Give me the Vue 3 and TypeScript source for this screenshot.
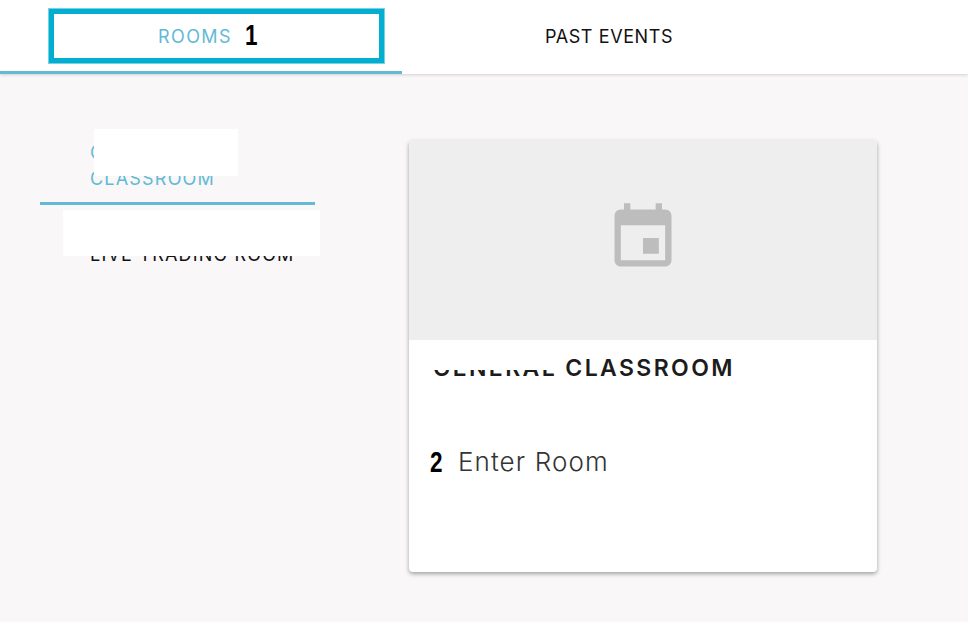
<template>
  <div class="page">
    <header class="tabs">
      <button
        v-for="tab in tabs"
        :key="tab.label"
        class="tab"
        :class="{ active: tab.active }"
      >
        {{ tab.label }}
      </button>
    </header>

    <main class="content">
      <nav class="rooms">
        <a
          v-for="room in rooms"
          :key="room.name"
          class="room"
          :class="{ selected: room.selected }"
        >
          {{ room.name }}
        </a>
      </nav>

      <section class="card">
        <div class="card-image">
          <svg class="event-icon" viewBox="0 0 24 24">
            <path d="M17 12h-5v5h5v-5zM16 1v2H8V1H6v2H5c-1.11 0-1.99.9-1.99 2L3 19c0 1.1.89 2 2 2h14c1.1 0 2-.9 2-2V5c0-1.1-.9-2-2-2h-1V1h-2zm3 18H5V8h14v11z" />
          </svg>
        </div>
        <div class="card-body">
          <h2 class="card-title">GENERAL CLASSROOM</h2>
          <p class="card-action">Enter Room</p>
        </div>
      </section>
    </main>

    <!-- annotations painted over the screenshot -->
    <div class="callout"></div>
    <span class="marker marker-one">1</span>
    <span class="marker marker-two">2</span>
    <div class="patch patch-room-a"></div>
    <div class="patch patch-room-b"></div>
    <div class="patch patch-title"></div>
  </div>
</template>

<script setup lang="ts">
const tabs = [
  { label: 'ROOMS', active: true },
  { label: 'PAST EVENTS', active: false },
];

const rooms = [
  { name: 'GENERAL CLASSROOM', selected: true },
  { name: 'LIVE TRADING ROOM', selected: false },
];
</script>

<style>
html,
body {
  margin: 0;
  background: #f9f7f8;
}
</style>

<style scoped>
.page {
  position: relative;
  width: 968px;
  height: 622px;
  overflow: hidden;
  background: #f9f7f8;
  font-family: Inter, "Open Sans", sans-serif;
}

.tabs {
  display: flex;
  height: 74px;
  background: #fff;
  box-shadow: 0 1px 3px rgba(0, 0, 0, 0.16);
}

.tab {
  width: 402px;
  height: 74px;
  padding: 2px 0 0;
  border: 0;
  border-bottom: 3px solid transparent;
  background: none;
  font: inherit;
  font-size: 18px;
  letter-spacing: 0.6px;
  color: #111;
}

.tab.active {
  padding-right: 12px;
  border-bottom-color: #62bad5;
  letter-spacing: 1.4px;
  color: #62bad5;
}

.tab:last-child {
  padding-left: 12px;
}

.content {
  display: flex;
  align-items: flex-start;
  padding: 66px 0 0 40px;
}

.rooms {
  display: flex;
  flex-direction: column;
  width: 275px;
  margin-right: 94px;
}

.room {
  box-sizing: border-box;
  padding: 0 0 0 50px;
  font-size: 18px;
  line-height: 26px;
  letter-spacing: 1.2px;
  color: #111;
}

.room.selected {
  height: 65px;
  padding-right: 80px;
  border-bottom: 3px solid #62bad5;
  color: #62bad5;
}

.room:not(.selected) {
  padding-top: 37px;
}

.card {
  width: 468px;
  height: 432px;
  border-radius: 4px;
  overflow: hidden;
  background: #fff;
  box-shadow: 0 2px 4px rgba(0, 0, 0, 0.35);
}

.card-image {
  display: flex;
  justify-content: center;
  height: 200px;
  background: #eee;
}

.event-icon {
  width: 76px;
  height: 76px;
  margin-top: 60px;
  fill: #bdbdbd;
}

.card-body {
  padding: 12px 24px;
}

.card-title {
  margin: 0;
  font-size: 23px;
  font-weight: 600;
  line-height: 32px;
  letter-spacing: 2.4px;
  color: #1c1c1c;
  white-space: nowrap;
}

.card-action {
  margin: 60px 0 0 25px;
  font-size: 26px;
  font-weight: 300;
  line-height: 36px;
  letter-spacing: 1.1px;
  color: #333;
}

.callout {
  position: absolute;
  top: 9px;
  left: 49px;
  box-sizing: border-box;
  width: 335px;
  height: 54px;
  border: 5px solid #04aed1;
  box-shadow: 0 0 0 1px rgba(4, 174, 209, 0.55);
}

.marker {
  position: absolute;
  font-family: "Liberation Sans", sans-serif;
  font-weight: 700;
  font-size: 30px;
  line-height: 30px;
  color: #000;
  transform: scaleX(0.75);
  transform-origin: left center;
}

.marker-one {
  top: 20px;
  left: 245px;
}

.marker-two {
  top: 447px;
  left: 430px;
}

.patch {
  position: absolute;
  background: #fff;
}

.patch-room-a {
  top: 129px;
  left: 94px;
  width: 144px;
  height: 47px;
}

.patch-room-b {
  top: 210px;
  left: 63px;
  width: 257px;
  height: 46px;
}

.patch-title {
  top: 352px;
  left: 430px;
  width: 130px;
  height: 18px;
}
</style>
